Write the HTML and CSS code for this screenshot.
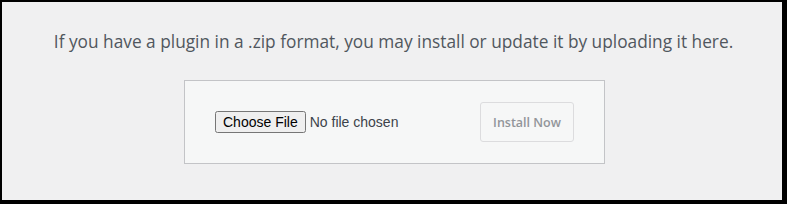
FILE: index.html
```html
<!DOCTYPE html>
<html>
<head>
<meta name="viewport" content="width=device-width, initial-scale=1">
<link rel="stylesheet" href="styles.css">
</head>
<body>

<div class="frame">
    <p class="upload-help">If you have a plugin in a .zip format, you may install or update it by uploading it here.</p>

    <form class="upload-form" action="#">
        <input type="file" id="pluginzip" name="pluginzip" accept=".zip">
        <input type="submit" class="button" value="Install Now" disabled>
    </form>
</div>

</body>
</html>
```

FILE: styles.css
```css
body {
  margin: 0;
}

/* Black frame round the screenshot */
.frame {
  width: 787px;
  height: 204px;
  box-sizing: border-box;
  border-style: solid;
  border-color: #000;
  border-width: 2px 5px 4px 2px;
  background: #f0f0f1;
  display: flex;
  flex-direction: column;
  align-items: center;
  font-family: "Open Sans", sans-serif;
}

.upload-help {
  margin: 27px 0 0 3px;
  font-size: 17.3px;
  line-height: 26px;
  color: #50575e;
}

/* Upload box */
.upload-form {
  margin: 25px 0 0 5px;
  width: 421px;
  height: 84px;
  box-sizing: border-box;
  border: 1px solid #c3c4c7;
  background: #f6f7f7;
  padding: 0 30px;
  display: flex;
  align-items: center;
  justify-content: space-between;
}

.upload-form input[type=file] {
  font-family: "Liberation Sans", Arial, sans-serif;
  font-size: 14px;
  color: #3c434a;
}

.button {
  width: 101px;
  height: 40px;
  border: 1px solid #dcdcde;
  border-radius: 3px;
  background: #f6f7f7;
  color: #92959a;
  font-family: "Open Sans", sans-serif;
  font-size: 12.5px;
  font-weight: 600;
}
```
